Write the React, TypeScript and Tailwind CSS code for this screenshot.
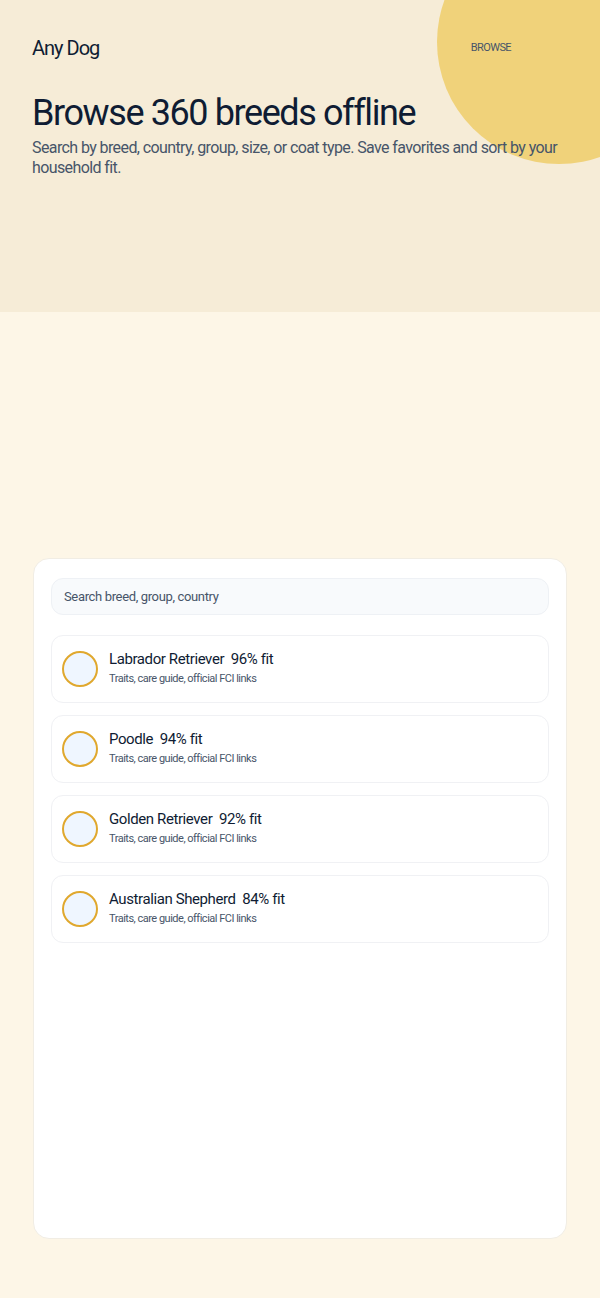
import React from 'react';

const breeds = [
  { name: 'Labrador Retriever', fit: 96 },
  { name: 'Poodle', fit: 94 },
  { name: 'Golden Retriever', fit: 92 },
  { name: 'Australian Shepherd', fit: 84 },
];

export default function App() {
  return (
    <div className="min-h-[1298px] bg-[#fdf6e7] font-['Roboto',sans-serif] text-[#0f1c33]">
      {/* Hero */}
      <header className="relative h-[312px] overflow-hidden bg-[#f6ecd7] px-8 pt-[36px]">
        <div className="absolute left-[437px] top-[-80px] h-[244px] w-[244px] rounded-full bg-[#f0d27a]" />
        <div className="relative flex items-center justify-between">
          <div className="text-[20px] leading-[24px] tracking-[-1px]">Any Dog</div>
          <nav className="mr-[57px] text-[11px] uppercase tracking-[-0.6px] text-[#475569]">Browse</nav>
        </div>
        <h1 className="relative mt-[31px] text-[36px] leading-[44px] tracking-[-1.4px]">
          Browse 360 breeds offline
        </h1>
        <p className="relative mt-[3px] text-[16px] leading-[20px] tracking-[-0.6px] text-[#475569]">
          Search by breed, country, group, size, or coat type. Save favorites and sort by your household fit.
        </p>
      </header>

      {/* Main */}
      <main className="px-[33px] pt-[246px] pb-[60px]">
        <section className="h-[681px] rounded-2xl border border-[#f1ede4] bg-white px-[17px] pt-[19px]">
          <div className="flex h-[37px] items-center rounded-xl border border-[#eef1f5] bg-[#f8fafc] px-3 text-[13px] tracking-[-0.35px] text-[#475569]">
            Search breed, group, country
          </div>
          <ul className="mt-5 flex flex-col gap-3">
            {breeds.map((b) => (
              <li
                key={b.name}
                className="flex h-[68px] items-center gap-[11px] rounded-xl border border-[#f0f1f4] bg-white px-[10px]"
              >
                <div className="h-9 w-9 shrink-0 rounded-full border-2 border-[#e0a82e] bg-[#eff6ff]" />
                <div className="mb-[4px] flex flex-col">
                  <div className="text-[15px] leading-[20px] tracking-[-0.4px]">
                    {b.name}&nbsp; {b.fit}% fit
                  </div>
                  <div className="mt-[3px] text-[11px] leading-[14px] tracking-[-0.5px] text-[#475569]">
                    Traits, care guide, official FCI links
                  </div>
                </div>
              </li>
            ))}
          </ul>
        </section>
      </main>
    </div>
  );
}
